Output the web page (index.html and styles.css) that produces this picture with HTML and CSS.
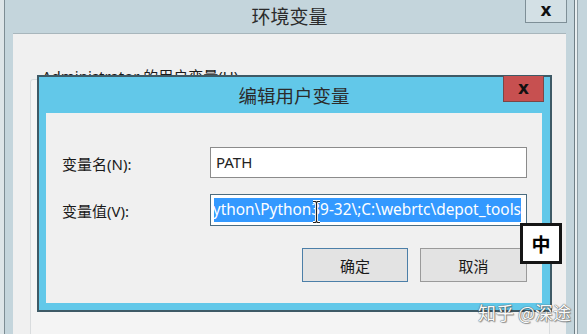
FILE: index.html
```html
<!DOCTYPE html>
<html lang="zh-CN">
<head>
<meta charset="utf-8">
<title>编辑用户变量</title>
<link rel="stylesheet" href="styles.css">
</head>
<body>
<div class="screen">
  <div class="outer">
    <div class="titlebar outer-titlebar">
      <span class="title outer-title">环境变量</span>
      <div class="close outer-close">x</div>
    </div>
    <div class="outer-panel">
      <div class="user-vars-label">Administrator 的用户变量(U)</div>
      <div class="listbox"></div>
    </div>
  </div>

  <div class="dialog">
    <div class="titlebar dialog-titlebar">
      <span class="title dialog-title">编辑用户变量</span>
      <div class="close dialog-close">x</div>
    </div>
    <div class="dialog-body">
      <div class="form">
        <label class="label">变量名(N):</label>
        <div class="field field-name">PATH</div>
        <label class="label">变量值(V):</label>
        <div class="field field-value"><div class="field-clip"><span class="selection">C:\Users\Administrator\AppData\Local\Programs\Python\Python39-32\;C:\webrtc\depot_tools</span></div></div>
      </div>
      <div class="buttons">
        <div class="btn btn-default">确定</div>
        <div class="btn btn-cancel">取消</div>
      </div>
    </div>
  </div>

  <svg class="ibeam" width="9" height="24" viewBox="0 0 9 24">
    <path d="M1 1.5h2.5l1 1 1-1H8M4.5 2.5v19M1 22.5h2.5l1-1 1 1H8" fill="none" stroke="#fff" stroke-width="3"/>
    <path d="M1 1.5h2.5l1 1 1-1H8M4.5 2.5v19M1 22.5h2.5l1-1 1 1H8" fill="none" stroke="#222" stroke-width="1.2"/>
  </svg>

  <div class="ime">中</div>
  <div class="watermark">知乎 @深途</div>
</div>
</body>
</html>
```

FILE: styles.css
```css
* { box-sizing: border-box; }
html, body { margin: 0; padding: 0; }
body {
  font-family: "Noto Sans", "Noto Sans CJK SC", sans-serif;
  background: #dfe6e8;
}
.screen {
  position: relative;
  width: 587px;
  height: 334px;
  overflow: hidden;
  display: flex;
  padding-left: 4px;
  background: #dde5e8;
}
.outer {
  flex: none;
  width: 571px;
  height: 380px;
  background: #c4d5dc;
  border-left: 1px solid #7d8d94;
  border-right: 1px solid #6f7f86;
  padding: 0 8px;
  display: flex;
  flex-direction: column;
  box-shadow: 2px 0 0 #e8eef0, 3px 0 0 #8d9da4, 14px 0 0 #c4d5dc;
}
.titlebar {
  display: grid;
  grid-template-columns: 1fr auto 1fr;
  align-items: center;
}
.title {
  grid-column: 2;
  font-family: "Noto Sans CJK SC", sans-serif;
  color: #2b2b2b;
  white-space: nowrap;
}
.close {
  grid-column: 3;
  justify-self: end;
  align-self: start;
  display: flex;
  align-items: center;
  justify-content: center;
  font-family: "DejaVu Sans", sans-serif;
  font-weight: bold;
  color: #111;
}
.outer-titlebar { height: 33px; }
.outer-title { font-size: 19px; line-height: 20px; margin-top: -1px; }
.outer-close {
  width: 42px;
  height: 23px;
  margin-right: -1px;
  border: 1px solid #7e8f97;
  border-top: none;
  background: #d3e0e5;
  font-size: 17px;
  padding-bottom: 3px;
}
.outer-panel {
  flex: 1;
  background: #f0f0f0;
  border-top: 1px solid #a8b6bc;
  padding: 32px 0 0 17px;
}
.user-vars-label {
  height: 13px;
  line-height: 20px;
  font-size: 15px;
  color: #1a1a1a;
  padding-left: 12px;
  white-space: nowrap;
}
.listbox {
  width: 520px;
  height: 300px;
  border: 1px solid #d9dcde;
  border-radius: 3px;
  background: #f4f4f4;
}

/* dialog window over the base window */
.dialog {
  position: absolute;
  left: 37px;
  top: 75px;
  width: 515px;
  height: 237px;
  border: 2px solid #3e5a66;
  background: #62c8e9;
  padding: 0 8px 7px 7px;
  display: flex;
  flex-direction: column;
}
.dialog-titlebar { height: 36px; }
.dialog-title { font-size: 18.5px; line-height: 20px; }
.dialog-close {
  width: 41px;
  height: 26px;
  margin-top: -1px;
  margin-right: -2px;
  background: #c75050;
  border: 1px solid #7a4646;
  border-top: none;
  font-size: 17px;
  padding-bottom: 2px;
}
.dialog-body {
  flex: 1;
  background: #f0f0f0;
  padding: 34px 15px 0 16px;
  display: flex;
  flex-direction: column;
}
.form {
  display: grid;
  grid-template-columns: 148px 317px;
  row-gap: 16px;
  align-items: center;
}
.label {
  font-size: 15px;
  color: #1a1a1a;
  white-space: nowrap;
  padding-top: 1px;
}
.field {
  border: 1px solid #8b8b8b;
  background: #fff;
  font-size: 15px;
  color: #222;
}
.field-name {
  height: 31px;
  line-height: 28px;
  padding-left: 5px;
}
.field-value {
  height: 32px;
  padding: 3px 5px 3px 3px;
  border-color: #4b6c80;
}
.field-clip {
  height: 24px;
  overflow: hidden;
  display: flex;
  justify-content: flex-end;
}
.selection {
  flex: none;
  white-space: nowrap;
  background: #3399ff;
  color: #fff;
  font-size: 15.4px;
  line-height: 24px;
}
.buttons {
  margin-top: 22px;
  display: flex;
  justify-content: flex-end;
  gap: 12px;
}
.btn {
  height: 34px;
  display: flex;
  align-items: center;
  justify-content: center;
  font-family: "Noto Sans CJK SC", sans-serif;
  font-size: 15px;
  color: #1a1a1a;
  background: #e3e3e3;
}
.btn-default { width: 106px; border: 1px solid #4c7fa8; }
.btn-cancel { width: 107px; border: 1px solid #9a9a9a; }

.ibeam {
  position: absolute;
  left: 312px;
  top: 200px;
}
.ime {
  position: absolute;
  left: 520px;
  top: 223px;
  width: 42px;
  height: 41px;
  border: 3px solid #151515;
  background: #fff;
  display: flex;
  align-items: center;
  justify-content: center;
  font-family: "Noto Sans CJK SC", sans-serif;
  font-weight: bold;
  font-size: 19px;
  color: #000;
}
.watermark {
  position: absolute;
  left: 478px;
  top: 300px;
  font-family: "Noto Sans CJK SC", sans-serif;
  font-size: 18px;
  line-height: 24px;
  color: #fafafa;
  white-space: nowrap;
  text-shadow: 0 0 1px #555, 0 0 1px #555, 1px 1px 1px rgba(0,0,0,0.35);
}
```
